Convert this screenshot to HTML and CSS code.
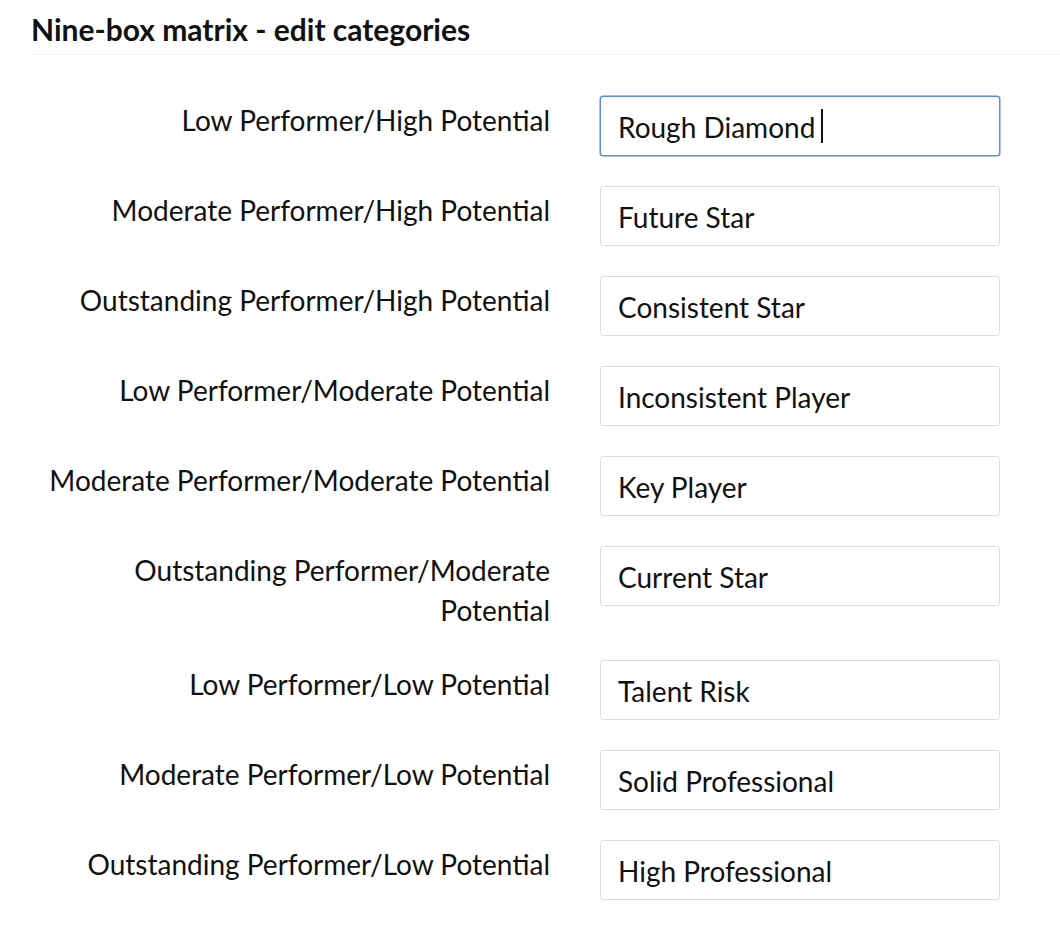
FILE: index.html
```html
<!DOCTYPE html>
<html lang="en">
<head>
<meta charset="utf-8">
<title>Nine-box matrix - edit categories</title>
<link rel="stylesheet" href="styles.css">
</head>
<body>
<div class="page">
  <div class="header">
    <h1 class="title">Nine-box matrix - edit categories</h1>
  </div>
  <form class="form">
    <label class="label" for="f1">Low Performer/High Potential</label>
    <div class="field">
      <input id="f1" class="input input-focus" type="text" value="Rough Diamond">
      <span class="caret"></span>
    </div>
    <label class="label" for="f2">Moderate Performer/High Potential</label>
    <div class="field"><input id="f2" class="input" type="text" value="Future Star"></div>
    <label class="label" for="f3">Outstanding Performer/High Potential</label>
    <div class="field"><input id="f3" class="input" type="text" value="Consistent Star"></div>
    <label class="label" for="f4">Low Performer/Moderate Potential</label>
    <div class="field"><input id="f4" class="input" type="text" value="Inconsistent Player"></div>
    <label class="label" for="f5">Moderate Performer/Moderate Potential</label>
    <div class="field"><input id="f5" class="input" type="text" value="Key Player"></div>
    <label class="label" for="f6">Outstanding Performer/Moderate Potential</label>
    <div class="field"><input id="f6" class="input" type="text" value="Current Star"></div>
    <label class="label" for="f7">Low Performer/Low Potential</label>
    <div class="field"><input id="f7" class="input" type="text" value="Talent Risk"></div>
    <label class="label" for="f8">Moderate Performer/Low Potential</label>
    <div class="field"><input id="f8" class="input" type="text" value="Solid Professional"></div>
    <label class="label" for="f9">Outstanding Performer/Low Potential</label>
    <div class="field"><input id="f9" class="input" type="text" value="High Professional"></div>
  </form>
</div>
</body>
</html>
```
FILE: styles.css
```css
html, body {
  margin: 0;
  padding: 0;
  background: #ffffff;
}

body {
  font-family: Lato, "Open Sans", "Liberation Sans", sans-serif;
  color: #111111;
}

.page {
  width: 1060px;
  min-height: 942px;
}

.header {
  margin-left: 31px;
  padding: 11px 0 7px 0;
  border-bottom: 1px solid #f0f0f0;
}

.title {
  margin: 0;
  font-size: 30px;
  font-weight: 700;
  line-height: 36px;
  color: #111111;
}

.form {
  display: grid;
  grid-template-columns: 510px 400px;
  column-gap: 50px;
  row-gap: 30px;
  margin: 41px 0 0 40px;
}

.label {
  text-align: right;
  font-size: 28px;
  line-height: 40px;
  padding-top: 4px;
  color: #111111;
}

.field {
  position: relative;
  height: 60px;
}

.input {
  box-sizing: border-box;
  width: 400px;
  height: 60px;
  margin: 0;
  padding: 2px 17px 0 17px;
  border: 1px solid #dedede;
  border-radius: 3px;
  background: #ffffff;
  font-family: Lato, "Open Sans", "Liberation Sans", sans-serif;
  font-size: 28px;
  color: #111111;
  outline: none;
}

.input-focus {
  border-color: #5b8ed8;
  box-shadow: 0 0 0 0.5px #5b8ed8;
}

.caret {
  position: absolute;
  left: 221px;
  top: 13px;
  width: 1.5px;
  height: 34px;
  background: #111111;
}
```
